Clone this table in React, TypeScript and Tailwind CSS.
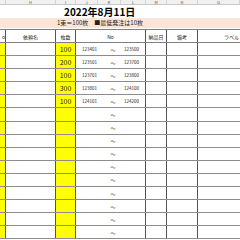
import React from 'react';

const font = { fontFamily: '"Noto Sans CJK JP", "Liberation Sans", sans-serif' };

const letters = [
  { l: '', w: 'w-[6px]' },
  { l: 'H', w: 'w-[50px]' },
  { l: 'I', w: 'w-[20px]' },
  { l: 'J', w: 'w-[22px]' },
  { l: 'K', w: 'w-[23px]' },
  { l: 'L', w: 'w-[25px]' },
  { l: 'M', w: 'w-[21px]' },
  { l: 'N', w: 'w-[31px]' },
  { l: 'O', w: 'flex-1' },
];

const rows = [
  { qty: '100', from: '123401', to: '123500' },
  { qty: '200', from: '123501', to: '123700' },
  { qty: '100', from: '123701', to: '123800' },
  { qty: '300', from: '123801', to: '124100' },
  { qty: '100', from: '124101', to: '124200' },
  ...Array.from({ length: 10 }, () => ({ qty: '', from: '', to: '' })),
];

export default function App() {
  return (
    <div className="w-[240px] h-[240px] overflow-hidden bg-white text-black" style={font}>
      {/* sheet column letters */}
      <div className="flex h-[5px] bg-[#f0f0f0] border-b border-[#c8c8c8]">
        {letters.map((c, i) => (
          <div key={i} className={`${c.w} shrink-0 border-r border-[#d4d4d4] flex items-center justify-center text-[4px] leading-[4px] text-[#555]`}>
            {c.l}
          </div>
        ))}
      </div>

      {/* title */}
      <div className="h-[13px] flex items-center pl-[64px] text-[10px] font-bold leading-none">
        2022年8月11日
      </div>

      {/* notice */}
      <div className="h-[10px] bg-[#fce4d6] flex items-center pl-[57px] text-[6px] leading-none text-[#222] whitespace-nowrap">
        1束＝100枚　■最低発注は10枚
      </div>

      <div className="h-[1px]" />

      {/* table header */}
      <div className="flex h-[14px] border-y border-[#808080] text-[5px] leading-none text-[#222]">
        <div className="w-[6px] shrink-0 border-r border-[#555] flex items-center justify-end overflow-hidden">o</div>
        <div className="w-[50px] shrink-0 border-r border-[#555] flex items-center justify-center">依頼名</div>
        <div className="w-[20px] shrink-0 border-r border-[#555] flex items-center justify-center">枚数</div>
        <div className="w-[70px] shrink-0 border-r border-[#555] flex items-center justify-center">No</div>
        <div className="w-[21px] shrink-0 border-r border-[#555] flex items-center justify-center">納品日</div>
        <div className="w-[31px] shrink-0 border-r border-[#555] flex items-center justify-center">備考</div>
        <div className="flex-1 flex items-center pl-[26px] whitespace-nowrap">ラベル</div>
      </div>

      {/* data rows */}
      {rows.map((r, i) => (
        <div key={i} className="flex h-[13.1px] border-b border-[#8c8c8c] text-[#222]">
          <div className="w-[6px] shrink-0 bg-[#ffff00] border-r border-[#5a5a3a]" />
          <div className="w-[50px] shrink-0 border-r border-[#555]" />
          <div className="w-[20px] shrink-0 bg-[#ffff00] border-r border-[#5a5a3a] flex items-center justify-center text-[7px] leading-none">
            {r.qty}
          </div>
          <div className="w-[70px] shrink-0 border-r border-[#555] flex items-center text-[4.5px] leading-none">
            <span className="w-[30px] pl-[6px]">{r.from}</span>
            <span className="w-[14px] text-center text-[5px]">～</span>
            <span className="pl-[4px]">{r.to}</span>
          </div>
          <div className="w-[21px] shrink-0 border-r border-[#555]" />
          <div className="w-[31px] shrink-0 border-r border-[#555]" />
          <div className="flex-1" />
        </div>
      ))}
    </div>
  );
}
